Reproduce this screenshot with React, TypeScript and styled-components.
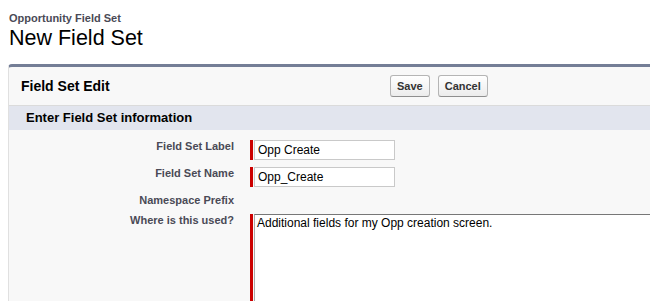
import React from "react";
import styled, { createGlobalStyle } from "styled-components";

const Global = createGlobalStyle`
  html, body { margin: 0; padding: 0; background: #fff; overflow: hidden; }
  body { font-family: "Liberation Sans", Arial, sans-serif; }
`;

const Page = styled.div`
  padding: 12px 0 0 8px;
  width: 642px;
  height: 289px;
  overflow: hidden;
`;

const SubTitle = styled.div`
  padding-left: 1px;
  font-size: 11px;
  line-height: 13px;
  font-weight: bold;
  color: #4a4a56;
`;

const Title = styled.h1`
  margin: 0;
  padding-left: 1px;
  font-size: 21.5px;
  line-height: 26px;
  font-weight: normal;
  color: #000;
`;

const Panel = styled.div`
  margin-top: 13px;
  width: 700px;
  background: #f8f8f8;
  border-top: 3px solid #747e96;
  border-left: 1px solid #e0e0e0;
  border-top-left-radius: 4px;
`;

const Header = styled.div`
  display: flex;
  align-items: center;
  height: 38px;
  padding-left: 12px;
  border-bottom: 1px solid #dbdbdb;
`;

const HeaderTitle = styled.h2`
  margin: 0;
  width: 369px;
  font-size: 14px;
  font-weight: bold;
  color: #000;
`;

const Buttons = styled.div`
  display: flex;
  gap: 8px;
`;

const Button = styled.button`
  height: 22px;
  padding: 0 6px;
  font-family: "Liberation Sans", Arial, sans-serif;
  font-size: 11px;
  font-weight: bold;
  color: #333;
  background: linear-gradient(#ffffff, #ececec);
  border: 1px solid #b5b5b5;
  border-bottom-color: #8f8f8f;
  border-radius: 3px;
`;

const Section = styled.h3`
  margin: 0;
  height: 24px;
  line-height: 24px;
  padding-left: 17px;
  background: #e2e5ee;
  font-size: 13px;
  font-weight: bold;
  color: #000;
`;

const Form = styled.div`
  padding-top: 10px;
`;

const Row = styled.div`
  display: flex;
  align-items: flex-start;
  min-height: 13px;
  margin-bottom: 7px;
`;

const Label = styled.label`
  width: 225px;
  text-align: right;
  font-size: 11px;
  line-height: 13px;
  font-weight: bold;
  color: #4a4a56;
`;

const Field = styled.div`
  display: flex;
  align-items: stretch;
  gap: 1px;
  margin-left: 16px;
`;

const RequiredBar = styled.span`
  width: 3px;
  background: #c00;
`;

const Input = styled.input`
  box-sizing: border-box;
  width: 141px;
  height: 20px;
  margin: 0;
  padding: 0 3px;
  border: 1px solid #c9c9c9;
  font-family: "Liberation Sans", Arial, sans-serif;
  font-size: 12px;
  color: #000;
  background: #fff;
  outline: none;
`;

const TextArea = styled.textarea`
  box-sizing: border-box;
  width: 420px;
  height: 110px;
  margin: 0;
  padding: 1px 2px;
  border: 1px solid #a9a9a9;
  border-top-color: #777;
  font-family: "Liberation Sans", Arial, sans-serif;
  font-size: 12px;
  line-height: 14px;
  color: #000;
  background: #fff;
  resize: none;
  outline: none;
`;

export default function App() {
  return (
    <>
      <Global />
      <Page>
        <SubTitle>Opportunity Field Set</SubTitle>
        <Title>New Field Set</Title>
        <Panel>
          <Header>
            <HeaderTitle>Field Set Edit</HeaderTitle>
            <Buttons>
              <Button>Save</Button>
              <Button>Cancel</Button>
            </Buttons>
          </Header>
          <Section>Enter Field Set information</Section>
          <Form>
            <Row>
              <Label>Field Set Label</Label>
              <Field>
                <RequiredBar />
                <Input defaultValue="Opp Create" />
              </Field>
            </Row>
            <Row>
              <Label>Field Set Name</Label>
              <Field>
                <RequiredBar />
                <Input defaultValue="Opp_Create" />
              </Field>
            </Row>
            <Row>
              <Label>Namespace Prefix</Label>
            </Row>
            <Row>
              <Label>Where is this used?</Label>
              <Field>
                <RequiredBar />
                <TextArea defaultValue="Additional fields for my Opp creation screen." />
              </Field>
            </Row>
          </Form>
        </Panel>
      </Page>
    </>
  );
}
